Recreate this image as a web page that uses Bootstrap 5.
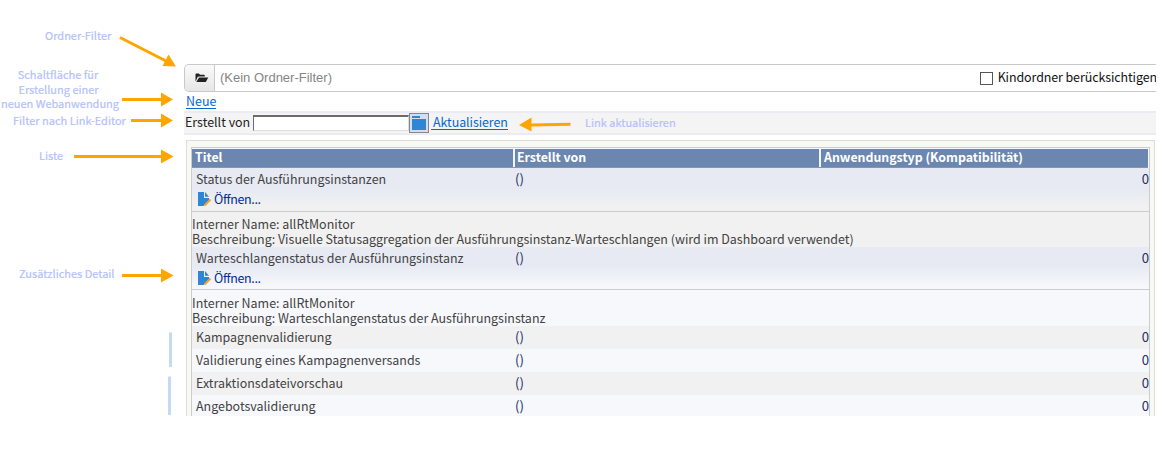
<!DOCTYPE html>
<html lang="de">
<head>
<meta charset="utf-8">
<meta name="viewport" content="width=device-width, initial-scale=1">
<title>Webanwendungen</title>
<link href="https://cdn.jsdelivr.net/npm/bootstrap@5.3.0/dist/css/bootstrap.min.css" rel="stylesheet">
<style>
body{width:1171px;height:451px;overflow:hidden;background:#fff;color:#424242;font:12.46px/15px "Noto Sans CJK SC",sans-serif}
.t{white-space:nowrap;display:inline-block}
.app{width:972px;height:352px;margin:64px 0 0 184px;overflow:hidden}
.folder-bar{height:28px;border:1px solid #c9c9c9;border-right:0;border-radius:5px 0 0 5px;background:#fff}
.folder-btn{width:30px;border-right:1px solid #c9c9c9;background:linear-gradient(#fafafa,#e6e6e6);border-radius:4px 0 0 4px}
.folder-name{font:13px/15px "Liberation Sans",sans-serif;color:#858585;padding-left:5px}
.child{color:#111;margin-right:-1px;padding-bottom:1px;letter-spacing:-.09px}
.box{width:13px;height:13px;border:1px solid #555;background:#fff;margin:1px 5px 0 0}
.lnk{color:#0a66cc;text-decoration:none;border-bottom:1px solid #0a66cc;line-height:13px;height:14px}
.new-row{height:19px;padding:2px 0 0 2px}
.strip{height:24px;border:solid #ecebf4;border-width:2px 0;background:#f4f4f4;color:#222;padding-left:1px}
.strip .t{margin-top:-2px}
.strip .lnk{margin:0 0 0 2px;padding-left:2px;letter-spacing:-.07px}
.strip .lbl{width:68px}
.field{width:156px;height:16px;border:1px solid #ddd;border-top:2px solid #6b6b6b;border-left:1px solid #6b6b6b;background:#fff;padding:0;border-radius:0}
.pick{width:20px;height:20px;border:1px solid #84878e;background:#d3def0}
.outer{margin:5px 1px 0 2px;height:400px;border:1px solid #e0ddd3;background:#f8f8f7;padding:6px 4px 0}
.inner{border:1px solid #ccc;border-bottom:0;height:390px;background:#f8f8fa}
.cols{display:grid;grid-template-columns:322px 306px 1fr}
.head{height:19px;margin:1px 1px 0 0;background:#6b87b0;color:#fff;font-size:12.35px;font-weight:700;border-bottom:1px solid #8095bc}
.head>div{padding:1px 0 0 3px;height:18px}
.head>div+div{border-left:2px solid #f3f5fa;padding-left:2px;margin-left:-1px}
.rowx{height:23px;padding:4px 0 0 4px}
.rowx .cols{grid-template-columns:319px 1fr auto}
.odd{background:#f1f1f1}.even{background:#f7f8fb}
.dk{color:#1c2f63;font-size:13.2px;margin-top:-1px}
.open{border-bottom:1px solid #ccc}
.o1{height:44px;background:linear-gradient(#e7eaf3 50%,#f1f1f1 92%)}
.o2{height:43px;background:linear-gradient(#e7eaf3 45%,#f7f8fb 95%)}
.op{color:#002d8f;padding:1px 0 0 6px;letter-spacing:-.35px}
.op .t{margin:0 0 0 2px}
.detail{height:35px;padding-top:5px}
.even.detail{height:36px;padding-top:6px}
.detail .t{display:block}
.note{position:absolute;color:#b4c1fb;font-size:11px;font-weight:400;line-height:15px;white-space:nowrap;text-align:center;-webkit-text-stroke:.2px #b4c1fb}
</style>
</head>
<body>
<main class="app">
  <div class="folder-bar d-flex align-items-stretch">
    <div class="folder-btn d-flex align-items-center justify-content-center"><svg style="margin-left:4px" width="14" height="10" viewBox="0 0 14 10"><path fill="#222" d="M.5 8V1.300Q.5.5 1.300.5h2.600l1.100 1.200H9q.8 0 .8.8v1H3.800Q3 3.500 2.600 4.100L.9 8z"/><path fill="#222" d="M4 4.500h9.300L10.800 9H1.300z"/></svg></div>
    <div class="folder-name align-self-center flex-grow-1" style="margin-top:-1px"><span class="t">(Kein Ordner-Filter)</span></div>
    <div class="child d-flex align-items-center"><span class="box"></span><span class="t">Kindordner berücksichtigen</span></div>
  </div>
  <div class="new-row"><a class="lnk t">Neue</a></div>
  <div class="strip d-flex align-items-center">
    <span class="t lbl">Erstellt von</span><input class="field" type="text" aria-label="Erstellt von">
    <span class="pick"><svg class="d-block" width="18" height="18"><path fill="#2e86d5" d="M2 2h8v2H2zM2 5h14v11H2z"/></svg></span>
    <a class="lnk t">Aktualisieren</a>
  </div>
  <section class="outer"><div class="inner">
    <div class="head cols"><div><span class="t">Titel</span></div><div><span class="t">Erstellt von</span></div><div><span class="t ps-1" style="margin-left:-3px">Anwendungstyp (Kompatibilität)</span></div></div>
    <div class="open o1">
      <div class="rowx"><div class="cols"><span class="t">Status der Ausführungsinstanzen</span><span class="dk">()</span><span class="dk">0</span></div></div>
      <div class="d-flex op"><svg width="14" height="15" viewBox="0 0 14 15"><path fill="#2e86d5" d="M0 0h6v6h5v2.500L5.500 14H0z"/><path fill="#2e86d5" d="M7 0l4 4.800H7z"/><path stroke="#f3a127" stroke-width="2" d="M6.500 13.500l6-6"/></svg><span class="t">Öffnen...</span></div>
    </div>
    <div class="odd detail"><span class="t">Interner Name: allRtMonitor</span><span class="t">Beschreibung: Visuelle Statusaggregation der Ausführungsinstanz-Warteschlangen (wird im Dashboard verwendet)</span></div>
    <div class="open o2">
      <div class="rowx"><div class="cols"><span class="t">Warteschlangenstatus der Ausführungsinstanz</span><span class="dk">()</span><span class="dk">0</span></div></div>
      <div class="d-flex op"><svg width="14" height="15" viewBox="0 0 14 15"><path fill="#2e86d5" d="M0 0h6v6h5v2.500L5.500 14H0z"/><path fill="#2e86d5" d="M7 0l4 4.800H7z"/><path stroke="#f3a127" stroke-width="2" d="M6.500 13.500l6-6"/></svg><span class="t">Öffnen...</span></div>
    </div>
    <div class="even detail"><span class="t">Interner Name: allRtMonitor</span><span class="t">Beschreibung: Warteschlangenstatus der Ausführungsinstanz</span></div>
    <div class="rowx odd"><div class="cols"><span class="t">Kampagnenvalidierung</span><span class="dk">()</span><span class="dk">0</span></div></div>
    <div class="rowx even"><div class="cols"><span class="t">Validierung eines Kampagnenversands</span><span class="dk">()</span><span class="dk">0</span></div></div>
    <div class="rowx odd"><div class="cols"><span class="t">Extraktionsdateivorschau</span><span class="dk">()</span><span class="dk">0</span></div></div>
    <div class="rowx even"><div class="cols"><span class="t">Angebotsvalidierung</span><span class="dk">()</span><span class="dk">0</span></div></div>
  </div></section>
</main>

<!-- callouts laid over the form -->
<div class="note" style="left:45px;top:28px">Ordner-Filter</div>
<div class="note" style="left:1px;top:67px;width:117px;line-height:14.500px"><span style="margin-right:3px">Schaltfläche für</span><br><span style="margin-right:2px">Erstellung einer</span><br>neuen Webanwendung</div>
<div class="note" style="left:13px;top:113px">Filter nach Link-Editor</div>
<div class="note" style="left:39px;top:148px">Liste</div>
<div class="note" style="left:19px;top:266px">Zusätzliches Detail</div>
<div class="note" style="left:585px;top:115px">Link aktualisieren</div>
<svg class="position-absolute top-0 start-0" width="1171" height="451">
  <g stroke="#ffa500" stroke-width="3" fill="none"><path d="M120 37.500L168 62M122 99.500h40M131 120.500h31M74 156.500h88M122 275.500h40M570.500 124.300L531 125"/></g>
  <g fill="#ffa500"><path d="M176 66.500l-13.500-.5 6-11.500zM173 99.500l-12 7v-14zM173 120.500l-12 7v-14zM173.500 156.500l-12.500 7v-14zM173.500 275.500l-12.500 7v-14zM519 125l12.500-7.500v14z"/></g>
  <path fill="#c6d9f1" d="M169 332.500h3V367h-3zM168 376.500h3V415h-3z"/>
</svg>
</body>
</html>
